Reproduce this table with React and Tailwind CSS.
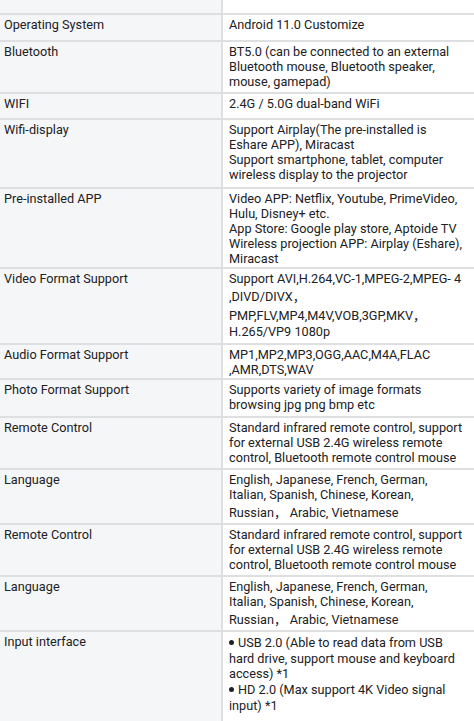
import React from "react";

const rows = [
  ["Operating System", 27, ["Android 11.0 Customize"]],
  ["Bluetooth", 52, ["BT5.0 (can be connected to an external", "Bluetooth mouse, Bluetooth speaker,", "mouse, gamepad)"]],
  ["WIFI", 26, ["2.4G / 5.0G dual-band WiFi"]],
  ["Wifi-display", 69, ["Support Airplay(The pre-installed is", "Eshare APP), Miracast", "Support smartphone, tablet, computer", "wireless display to the projector"]],
  ["Pre-installed APP", 80, ["Video APP: Netflix, Youtube, PrimeVideo,", "Hulu, Disney+ etc.", "App Store: Google play store, Aptoide TV", "Wireless projection APP: Airplay (Eshare),", "Miracast"]],
  ["Video Format Support", 76, ["Support AVI,H.264,VC-1,MPEG-2,MPEG- 4", ",DIVD/DIVX，", "PMP,FLV,MP4,M4V,VOB,3GP,MKV，", "H.265/VP9 1080p"]],
  ["Audio Format Support", 35, ["MP1,MP2,MP3,OGG,AAC,M4A,FLAC", ",AMR,DTS,WAV"]],
  ["Photo Format Support", 38, ["Supports variety of image formats", "browsing jpg png bmp etc"]],
  ["Remote Control", 52, ["Standard infrared remote control, support", "for external USB 2.4G wireless remote", "control, Bluetooth remote control mouse"]],
  ["Language", 55, ["English, Japanese, French, German,", "Italian, Spanish, Chinese, Korean,", "Russian， Arabic, Vietnamese"]],
  ["Remote Control", 52, ["Standard infrared remote control, support", "for external USB 2.4G wireless remote", "control, Bluetooth remote control mouse"]],
  ["Language", 55, ["English, Japanese, French, German,", "Italian, Spanish, Chinese, Korean,", "Russian， Arabic, Vietnamese"]],
  ["Input interface", 91, [
    { bullet: true, text: "USB 2.0 (Able to read data from USB" },
    "hard drive, support mouse and keyboard",
    "access) *1",
    { bullet: true, text: "HD 2.0 (Max support 4K Video signal" },
    "input) *1",
  ]],
];

function Line({ l }) {
  if (typeof l === "string") return <div>{l}</div>;
  return (
    <div className="pt-[1px] pb-[1px]">
      <span className="inline-block w-[5px] h-[5px] rounded-full bg-[#202124] align-middle mb-[2px] mr-[4px]" />
      {l.text}
    </div>
  );
}

export default function App() {
  return (
    <div
      className="w-[474px] h-[721px] overflow-hidden bg-white text-[#202124] text-[12.7px] leading-[normal]"
      style={{ fontFamily: "Roboto, 'Noto Sans CJK SC', sans-serif" }}
    >
      <div className="grid grid-cols-[223px_1fr] h-[13px]">
        <div className="bg-[#f5f6f8] border-r-2 border-[#dedfe1]" />
        <div />
      </div>
      {rows.map(([label, h, lines], i) => (
        <div
          key={i}
          className="grid grid-cols-[223px_1fr] border-t-2 border-[#dedfe1] overflow-hidden"
          style={{ height: h }}
        >
          <div className="bg-[#f5f6f8] border-r-2 border-[#dedfe1] pl-[4px] pt-[2px]">{label}</div>
          <div className="pl-[6px] pr-1 pt-[2px]">
            {lines.map((l, j) => (
              <Line key={j} l={l} />
            ))}
          </div>
        </div>
      ))}
    </div>
  );
}
